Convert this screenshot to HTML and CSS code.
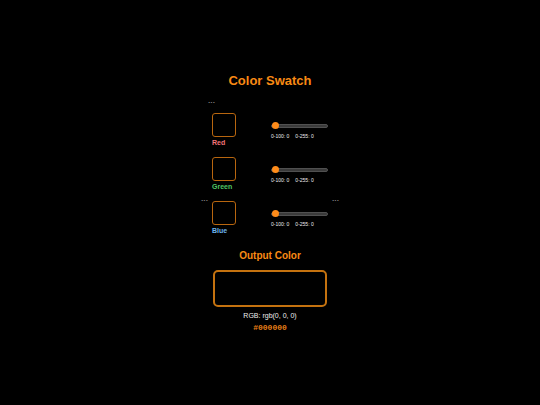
FILE: index.html
```
<!DOCTYPE html>
<html lang="en">
<head>
    <meta charset="UTF-8">
    <meta name="viewport" content="width=device-width, initial-scale=1.0">
    <title>Color Swatch</title>
    <link rel="stylesheet" href="styles.css">
</head>
<body>
    ```
    <main class="container">
        <h1>Color Swatch</h1>
        ```
        <div class="channels">
            <div class="channel red">
                <div class="swatch-box">
                    <div class="swatch" id="redSwatch"></div>
                    <label for="red">Red</label>
                </div>
                <div class="control">
                    <input type="range" id="red" min="0" max="255" value="0">
                    <div class="values"><span>0-100: <span id="redPercent">0</span></span><span>0-255: <span id="redValue">0</span></span></div>
                </div>
            </div>
            <div class="channel green">
                <div class="swatch-box">
                    <div class="swatch" id="greenSwatch"></div>
                    <label for="green">Green</label>
                </div>
                <div class="control">
                    <input type="range" id="green" min="0" max="255" value="0">
                    <div class="values"><span>0-100: <span id="greenPercent">0</span></span><span>0-255: <span id="greenValue">0</span></span></div>
                </div>
            </div>
            <div class="channel blue">
                <div class="swatch-box">
                    <div class="swatch" id="blueSwatch"></div>
                    <label for="blue">Blue</label>
                </div>
                <div class="control">
                    <input type="range" id="blue" min="0" max="255" value="0">
                    <div class="values"><span>0-100: <span id="bluePercent">0</span></span><span>0-255: <span id="blueValue">0</span></span></div>
                </div>
            </div>
        </div>

        <section class="output">
            <h2>Output Color</h2>
            <div class="output-box" id="output"></div>
            <p class="rgb" id="rgbText">RGB: rgb(0, 0, 0)</p>
            <p class="hex" id="hexText">#000000</p>
        </section>
    </main>
    ```
    <script src="script.js"></script>
</body>
</html>
```

FILE: styles.css
```
* {
    box-sizing: border-box;
    margin: 0;
    padding: 0;
}

body {
    display: flex;
    justify-content: center;
    align-items: center;
    min-height: 100vh;
    background: #000;
    color: #eee;
    font-family: "Liberation Sans", Arial, sans-serif;
    font-size: 7px;
    line-height: 8px;
}

.container {
    width: 124px;
}

h1 {
    margin-bottom: 12px;
    color: #f98a14;
    font-size: 13px;
    line-height: 16px;
    text-align: center;
}

.channels {
    display: flex;
    flex-direction: column;
    gap: 10px;
    padding: 4px 4px 0;
}

.channel {
    display: flex;
    justify-content: space-between;
}

.swatch {
    width: 24px;
    height: 24px;
    margin-bottom: 2px;
    border: 1px solid #b8660f;
    border-radius: 3px;
    background: #000;
}

label {
    display: block;
    font-weight: bold;
}

.red label {
    color: #f07478;
}

.green label {
    color: #51c566;
}

.blue label {
    color: #6cb4ee;
}

.control {
    width: 57px;
    padding-top: 10px;
}

input[type="range"] {
    display: block;
    width: 100%;
    height: 6px;
    appearance: none;
    background: transparent;
}

input[type="range"]::-webkit-slider-runnable-track {
    height: 4px;
    border: 1px solid #505050;
    border-radius: 2px;
    background: #3a3a3a;
}

input[type="range"]::-webkit-slider-thumb {
    width: 7px;
    height: 7px;
    margin-top: -3px;
    appearance: none;
    border-radius: 50%;
    background: #ff8c1a;
}

.values {
    display: flex;
    gap: 6px;
    margin-top: 4px;
    font-size: 5px;
    line-height: 6px;
    white-space: nowrap;
}

.output {
    padding: 15px 5px 1px;
    text-align: center;
}

h2 {
    margin-bottom: 8px;
    color: #f98a14;
    font-size: 10px;
    line-height: 12px;
}

.output-box {
    height: 37px;
    margin-bottom: 5px;
    border: 2px solid #c4720f;
    border-radius: 5px;
    background: #000;
}

.rgb {
    margin-bottom: 4px;
}

.hex {
    color: #e67e17;
    font-family: "Liberation Mono", "Courier New", monospace;
    font-size: 8px;
    font-weight: bold;
}
```

FILE: script.js
```
const channels = ['red', 'green', 'blue'];

function updateColor() {
    const values = channels.map(name => Number(document.getElementById(name).value));

    channels.forEach((name, i) => {
        const own = values.map((v, j) => (j === i ? v : 0));
        document.getElementById(name + 'Swatch').style.background = `rgb(${own.join(', ')})`;
        document.getElementById(name + 'Percent').textContent = Math.round(values[i] / 255 * 100);
        document.getElementById(name + 'Value').textContent = values[i];
    });

    const rgb = `rgb(${values.join(', ')})`;
    document.getElementById('output').style.background = rgb;
    document.getElementById('rgbText').textContent = 'RGB: ' + rgb;
    document.getElementById('hexText').textContent = '#' + values.map(v => v.toString(16).padStart(2, '0')).join('');
}

channels.forEach(name => document.getElementById(name).addEventListener('input', updateColor));
updateColor();
```
